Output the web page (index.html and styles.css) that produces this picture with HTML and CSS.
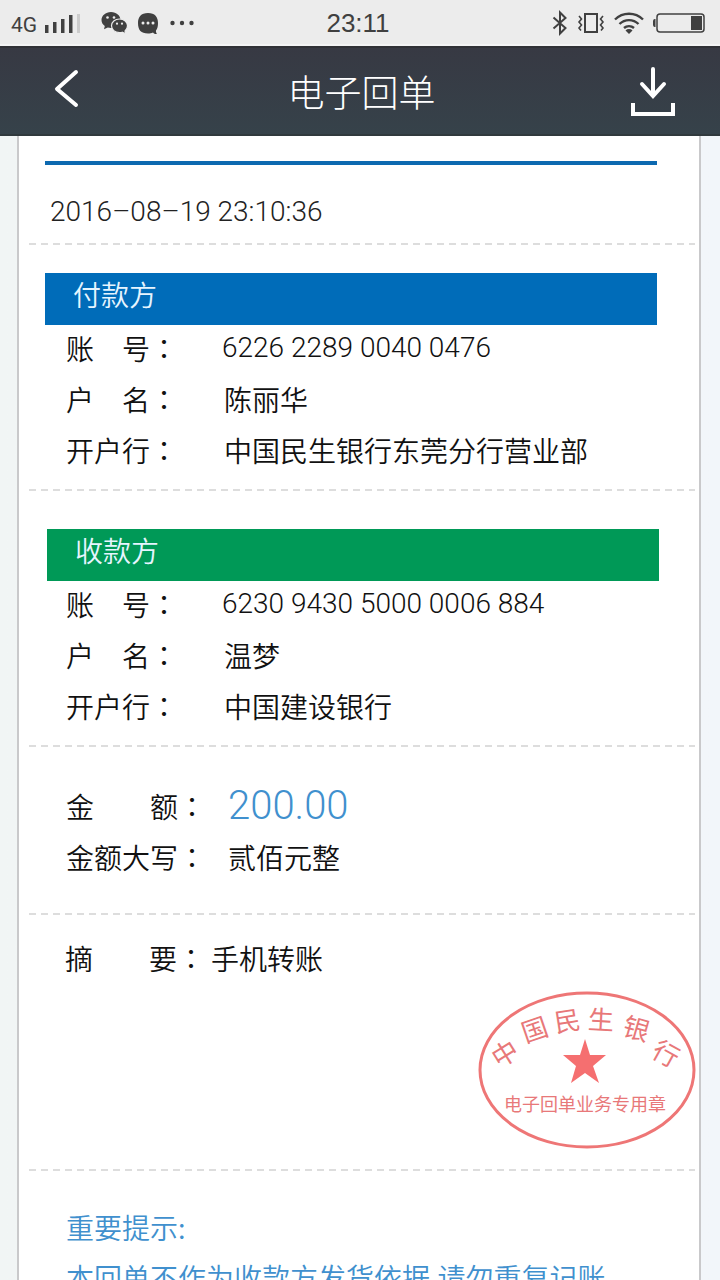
FILE: index.html
```html
<!DOCTYPE html>
<html lang="zh-CN">
<head>
<meta charset="utf-8">
<meta name="viewport" content="width=device-width, initial-scale=1">
<title>电子回单</title>
<link rel="stylesheet" href="styles.css">
</head>
<body>
<div class="status">
  <div class="status-left">
    <span class="network">4G</span>
    <svg class="signal" width="37" height="20" viewBox="0 0 37 20" fill="#404040"><path d="M0 11h3.500v8H0zM8 8h3.500v11H8zM16 5h3.500v14H16zM24 1h3.500v18H24z"/><path fill="#ccc" d="M32 0h3v19h-3z"/></svg>
    <svg class="wechat" width="27" height="24" viewBox="0 0 27 24"><path fill="#404040" d="M10 1C4.500 1 .5 4.700.5 9c0 2.500 1.300 4.600 3.300 6.100L3 18.200l3.800-1.700c1 .3 2.100.5 3.200.5 5.500 0 9.500-3.700 9.500-8S15.500 1 10 1z"/><path fill="#404040" stroke="#ececec" stroke-width="1.200" d="M18.500 8c-4.600 0-8 3-8 6.800s3.400 6.800 8 6.800c1 0 1.900-.1 2.700-.4l3.500 1.600-.7-2.900c1.600-1.200 2.500-3 2.500-5.100 0-3.800-3.400-6.800-8-6.800z"/><g fill="#ececec"><circle cx="6.500" cy="6.500" r="1.300"/><circle cx="13" cy="6.500" r="1.300"/><circle cx="16" cy="12.700" r="1.100"/><circle cx="21" cy="12.700" r="1.100"/></g></svg>
    <svg class="chat" width="22" height="22" viewBox="0 0 22 22"><path fill="#404040" d="M11 0C4 0 1 4 1 10c0 7 3 10.500 10 10.500 2 0 3.500-.3 5-1 1 1.200 2.300 1.700 4 1.500-.8-1-1.200-2.200-1-3.500C20.500 15.700 21 13 21 10c0-6-3-10-10-10z"/><g fill="#ececec"><circle cx="6" cy="10" r="1.500"/><circle cx="11" cy="10" r="1.500"/><circle cx="16" cy="10" r="1.500"/></g></svg>
    <svg class="more" width="24" height="6" viewBox="0 0 24 6" fill="#404040"><circle cx="2.500" cy="3" r="2.200"/><circle cx="12" cy="3" r="2.200"/><circle cx="21.500" cy="3" r="2.200"/></svg>
  </div>
  <span class="clock">23:11</span>
  <div class="status-right">
    <svg width="16" height="26" viewBox="0 0 16 26" fill="none" stroke="#404040" stroke-width="2"><path d="M1.500 7.500 13.500 18 8 23.500v-21L13.500 8 1.500 18.500"/></svg>
    <svg width="28" height="22" viewBox="0 0 28 22" fill="none" stroke="#404040" stroke-width="2"><path d="M8 2h12v18H8z"/><path stroke-width="1.600" d="M2 4l2.500 3-2.500 3 2.500 3L2 16l2 2.500M26 4l-2.500 3 2.500 3-2.500 3 2.500 3-2 2.500"/></svg>
    <svg width="30" height="22" viewBox="0 0 30 22" fill="none" stroke="#404040" stroke-width="2.400"><path d="M1 7.500a20 20 0 0 1 28 0M5.500 12a13.500 13.500 0 0 1 19 0M10 16a7.500 7.500 0 0 1 10 0"/><path fill="#404040" stroke="none" d="M11.500 18.500a5 5 0 0 1 7 0L15 22z"/></svg>
    <svg width="52" height="20" viewBox="0 0 52 20"><path fill="#404040" d="M2.500 6v8C0 14 0 12.500 0 10s0-4 2.500-4zM38 3h11v14H38z"/><rect x="4" y="1" width="47" height="18" rx="3" fill="none" stroke="#404040" stroke-width="1.500"/></svg>
  </div>
</div>

<header class="nav">
  <button class="nav-button" aria-label="返回"><svg width="26" height="44" viewBox="0 0 26 44" fill="none" stroke="#fff" stroke-width="4" stroke-linecap="round" stroke-linejoin="round"><path d="M23 3 4 20l19 16"/></svg></button>
  <h1 class="nav-title">电子回单</h1>
  <button class="nav-button" aria-label="下载"><svg width="46" height="52" viewBox="0 0 46 52" fill="none" stroke="#fff" stroke-width="4" stroke-linecap="round"><path d="M23 4v27M12 19l11 12 11-12"/><path stroke-linecap="butt" d="M3 38v11h40V38"/></svg></button>
</header>

<main class="page">
  <article class="paper">
    <section class="issued">
      <hr class="rule">
      <time class="timestamp" datetime="2016-08-19T23:10:36">2016–08–19 23:10:36</time>
    </section>

    <section class="section payer">
      <h2 class="bar">付款方</h2>
      <dl class="rows">
        <div class="row"><dt>账　号<span class="colon" lang="ja">：</span></dt><dd class="digits">6226 2289 0040 0476</dd></div>
        <div class="row"><dt>户　名<span class="colon" lang="ja">：</span></dt><dd>陈丽华</dd></div>
        <div class="row"><dt>开户行<span class="colon" lang="ja">：</span></dt><dd>中国民生银行东莞分行营业部</dd></div>
      </dl>
    </section>

    <section class="section payee">
      <h2 class="bar">收款方</h2>
      <dl class="rows">
        <div class="row"><dt>账　号<span class="colon" lang="ja">：</span></dt><dd class="digits">6230 9430 5000 0006 884</dd></div>
        <div class="row"><dt>户　名<span class="colon" lang="ja">：</span></dt><dd>温梦</dd></div>
        <div class="row"><dt>开户行<span class="colon" lang="ja">：</span></dt><dd>中国建设银行</dd></div>
      </dl>
    </section>

    <section class="section money">
      <dl class="rows">
        <div class="row"><dt>金　　额<span class="colon" lang="ja">：</span></dt><dd class="amount">200.00</dd></div>
        <div class="row"><dt>金额大写<span class="colon" lang="ja">：</span></dt><dd>贰佰元整</dd></div>
      </dl>
    </section>

    <section class="section remark">
      <dl class="rows">
        <div class="row"><dt>摘　　要<span class="colon" lang="ja">：</span></dt><dd>手机转账</dd></div>
      </dl>
      <svg class="seal" width="218" height="160" viewBox="0 0 218 160" role="img" aria-label="中国民生银行 电子回单业务专用章">
        <ellipse cx="109" cy="80" rx="107" ry="77" fill="none" stroke="#ee7676" stroke-width="3"/>
        <g class="seal-arc">
          <text transform="translate(26 62) rotate(-32)">中</text>
          <text transform="translate(56 38) rotate(-19)">国</text>
          <text transform="translate(89 29) rotate(-9)">民</text>
          <text transform="translate(123 28) rotate(3)">生</text>
          <text transform="translate(159 37) rotate(16)">银</text>
          <text transform="translate(189 62) rotate(29)">行</text>
        </g>
        <path fill="#f56f70" d="M107 49l5 16h16l-13 11 6 17-14-10-14 10 5-17-13-11h17z"/>
        <text class="seal-line" x="107" y="121">电子回单业务专用章</text>
      </svg>
    </section>

    <section class="section notice">
      <h2 class="notice-title">重要提示:</h2>
      <p class="notice-text">本回单不作为收款方发货依据,请勿重复记账</p>
    </section>
  </article>
</main>
</body>
</html>
```

FILE: styles.css
```css
* {
  box-sizing: border-box;
}

body {
  margin: 0;
  height: 100vh;
  display: flex;
  flex-direction: column;
  overflow: hidden;
  color: #111;
  font-family: "Noto Sans CJK SC", sans-serif;
  font-size: 28px;
  font-weight: 350;
}

svg {
  display: block;
  flex: none;
}

h1, h2, dl, dd, p {
  margin: 0;
  font-weight: 350;
}

.status {
  flex: none;
  height: 46px;
  display: grid;
  grid-template-columns: 1fr auto 1fr;
  align-items: center;
  padding: 0 15px 0 11px;
  background: #ececec;
  border-bottom: 2px solid #f4f4f4;
  color: #404040;
  font-family: "Liberation Sans", Arial, sans-serif;
  font-weight: 400;
}

.status-left {
  display: flex;
  align-items: center;
}

.network {
  font-family: Roboto, sans-serif;
  font-size: 21px;
  padding-top: 6px;
}

.signal {
  margin-left: 8px;
  margin-top: 4px;
}

.wechat {
  margin-left: 19px;
  margin-top: 2px;
}

.chat {
  margin-left: 9px;
  margin-top: 3px;
}

.more {
  margin-left: 11px;
  margin-top: 2px;
}

.clock {
  font-size: 26px;
  padding-top: 3px;
}

.status-right {
  display: flex;
  align-items: center;
  justify-content: flex-end;
  gap: 9px;
  padding-top: 1px;
}

.nav {
  flex: none;
  height: 90px;
  display: grid;
  grid-template-columns: 1fr auto 1fr;
  align-items: center;
  padding: 0 44px 0 53px;
  background: linear-gradient(#373943, #36424a);
  border-top: 2px solid #303136;
  border-bottom: 2px solid #30393d;
  color: #fff;
}

.nav-button {
  display: flex;
  width: 46px;
  padding: 0;
  border: 0;
  background: none;
}

.nav-button:last-child {
  justify-self: end;
}

.nav-title {
  padding-right: 6px;
  font-size: 37px;
  line-height: 48px;
  font-weight: 300;
}

.page {
  flex: 1;
  min-height: 0;
  overflow: hidden auto;
  scrollbar-width: none;
  padding: 0 19px 0 17px;
  background: linear-gradient(90deg, #f1f5f5, #f2f6fa);
}

.paper {
  min-height: 100%;
  background: #fff;
  border: solid #c9c9cb;
  border-width: 0 2px;
}

.issued {
  padding: 25px 42px 10px 26px;
}

.rule {
  height: 4px;
  margin: 0;
  border: 0;
  background: #0d69b0;
}

.timestamp {
  display: block;
  padding: 26px 5px 0;
  font-family: Roboto, sans-serif;
  font-weight: 300;
  line-height: 42px;
  color: #222;
}

.section {
  background: repeating-linear-gradient(90deg, #ddd 0 7px, transparent 7px 12px) 10px 0 / calc(100% - 14px) 2px no-repeat;
}

.payer {
  padding: 30px 42px 11px 26px;
}

.payee {
  padding: 40px 40px 11px 28px;
}

.bar {
  height: 52px;
  padding-left: 28px;
  font-size: 28px;
  line-height: 42px;
  color: #e6f5ff;
  background: #006cb9;
}

.payee .bar {
  background: #009957;
}

.row {
  display: flex;
  margin-bottom: 5px;
  line-height: 46px;
}

.row dt {
  flex: none;
  width: 158px;
}

.payer .rows {
  padding-left: 21px;
}

.payee .rows {
  padding-left: 19px;
}

.colon {
  font-family: "Noto Sans CJK JP", sans-serif;
}

.row .digits {
  margin-left: -2px;
  font-family: Roboto, sans-serif;
  font-weight: 300;
}

.money {
  padding: 38px 47px 28px;
}

.money dt {
  width: 162px;
}

.amount {
  color: #4090ce;
  font-family: Roboto, sans-serif;
  font-size: 40px;
  font-weight: 300;
}

.remark {
  display: flex;
  flex-direction: column;
  padding: 22px 3px 19px 46px;
}

.remark dt {
  width: 146px;
}

.seal {
  align-self: flex-end;
  margin-top: 4px;
  font-weight: 400;
  text-anchor: middle;
  fill: #e87879;
}

.seal-arc {
  font-size: 26px;
}

.seal-arc text {
  dominant-baseline: central;
}

.seal-line {
  font-size: 18px;
}

.notice {
  padding: 33px 47px;
  line-height: 50px;
  color: #4090ce;
}

.notice-title {
  font-size: 28px;
}
```
